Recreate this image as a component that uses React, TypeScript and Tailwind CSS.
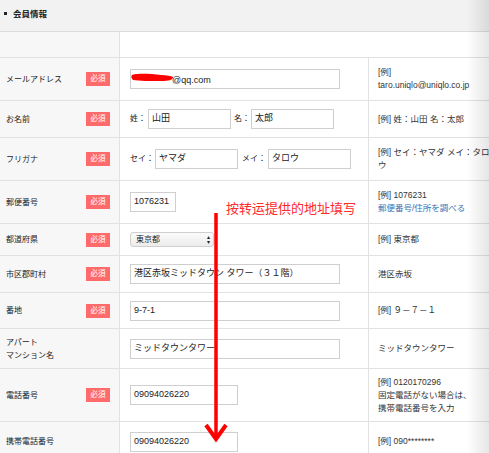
import React from 'react';

const font = { fontFamily: '"Liberation Sans", "Noto Sans CJK JP", sans-serif' };

const Badge = () => (
  <span className="inline-flex items-center justify-center w-[24px] h-[14px] bg-[#ff6b6b] text-white text-[7.5px] leading-none">
    必須
  </span>
);

const Field = ({ value, w }: { value: string; w: string }) => (
  <div className={`h-[20px] ${w} border border-[#cfcfcf] bg-white flex items-center pl-[3px] text-[9px] text-[#222] whitespace-nowrap overflow-hidden`}>
    {value}
  </div>
);

interface RowProps {
  h: string;
  label: React.ReactNode;
  required?: boolean;
  children?: React.ReactNode;
  note?: React.ReactNode;
}

const Row = ({ h, label, required, children, note }: RowProps) => (
  <div className={`flex ${h} border-b border-[#e2e2e2]`}>
    <div className="w-[120px] shrink-0 bg-[#f7f7f7] border-r border-[#e2e2e2] flex items-center justify-between pl-[6px] pr-[9px] text-[8px] text-[#222] leading-[13px]">
      <div>{label}</div>
      {required && <Badge />}
    </div>
    <div className="w-[249px] shrink-0 border-r border-[#e2e2e2] flex items-center pl-[10px]">{children}</div>
    <div className="flex-1 min-w-0 flex items-center pl-[9px] text-[8.5px] text-[#333] leading-[13px]">{note}</div>
  </div>
);

export default function App() {
  return (
    <div className="relative w-[489px] h-[453px] overflow-hidden bg-white" style={font}>
      {/* header */}
      <div className="h-[32px] bg-[#f2f2f2] border-b border-[#dcdcdc] flex items-start pt-[8px] pl-[4px]">
        <span className="w-[3px] h-[3px] bg-[#222] mt-[4px] mr-[6px]" />
        <span className="text-[8.5px] font-bold text-[#222]">会員情報</span>
      </div>

      <div className="flex h-[26px] border-b border-[#e2e2e2]">
        <div className="w-[120px] bg-[#f7f7f7] border-r border-[#e2e2e2]" />
        <div className="flex-1" />
      </div>

      <Row
        h="h-[43px]"
        label="メールアドレス"
        required
        note={
          <div>
            [例]
            <br />
            taro.uniqlo@uniqlo.co.jp
          </div>
        }
      >
        <div className="relative">
          <Field value="" w="w-[210px]" />
          <span className="absolute left-[42px] top-[5px] text-[9px] text-[#222]">@qq.com</span>
          <svg className="absolute left-[1px] top-[2px]" width="44" height="14" viewBox="0 0 44 14">
            <path d="M1 4 C8 2 20 3 30 4 C36 4 40 5 42 6 C42 9 38 10 30 10 C20 10 8 10 2 9 C0 7 0 5 1 4 Z" fill="#ff0000" />
          </svg>
        </div>
      </Row>

      <Row h="h-[37px]" label="お名前" required note="[例] 姓：山田 名：太郎">
        <div className="flex items-center text-[8px] text-[#222]">
          <span className="w-[18px]">姓：</span>
          <Field value="山田" w="w-[83px]" />
          <span className="w-[20px] pl-[3px]">名：</span>
          <Field value="太郎" w="w-[83px]" />
        </div>
      </Row>

      <Row
        h="h-[43px]"
        label="フリガナ"
        required
        note={
          <div>
            <div className="whitespace-nowrap">[例] セイ：ヤマダ メイ：タロ</div>
            <div>ウ</div>
          </div>
        }
      >
        <div className="flex items-center text-[8px] text-[#222]">
          <span className="w-[25px]">セイ：</span>
          <Field value="ヤマダ" w="w-[83px]" />
          <span className="w-[30px] pl-[4px]">メイ：</span>
          <Field value="タロウ" w="w-[83px]" />
        </div>
      </Row>

      <Row
        h="h-[43px]"
        label="郵便番号"
        required
        note={
          <div>
            [例] 1076231
            <br />
            <span className="text-[#3d6fb0]">郵便番号/住所を調べる</span>
          </div>
        }
      >
        <Field value="1076231" w="w-[46px]" />
      </Row>

      <Row h="h-[32px]" label="都道府県" required note="[例] 東京都">
        <div className="h-[15px] w-[84px] rounded-[3px] border border-[#cfcfcf] bg-gradient-to-b from-[#fbfbfb] to-[#ececec] flex items-center justify-between pl-[5px] pr-[3px] text-[8px] text-[#222]">
          <span>東京都</span>
          <span className="text-[6px] leading-[5px] flex flex-col items-center">
            <span>▴</span>
            <span>▾</span>
          </span>
        </div>
      </Row>

      <Row h="h-[37px]" label="市区郡町村" required note="港区赤坂">
        <Field value="港区赤坂ミッドタウン タワー（３１階）" w="w-[210px]" />
      </Row>

      <Row h="h-[36px]" label="番地" required note="[例] ９－７－１">
        <Field value="9-7-1" w="w-[210px]" />
      </Row>

      <Row
        h="h-[40px]"
        label={
          <div>
            アパート
            <br />
            マンション名
          </div>
        }
        note="ミッドタウンタワー"
      >
        <Field value="ミッドタウンタワー" w="w-[210px]" />
      </Row>

      <Row
        h="h-[53px]"
        label="電話番号"
        required
        note={
          <div>
            [例] 0120170296
            <br />
            固定電話がない場合は、
            <br />
            携帯電話番号を入力
          </div>
        }
      >
        <Field value="09094026220" w="w-[108px]" />
      </Row>

      <Row h="h-[40px]" label="携帯電話番号" note="[例] 090********">
        <Field value="09094026220" w="w-[108px]" />
      </Row>

      {/* annotation */}
      <div className="absolute left-[226px] top-[201px] text-[13px] text-[#ff2a2a] leading-none" style={{ fontFamily: '"Noto Sans CJK SC", sans-serif' }}>
        按转运提供的地址填写
      </div>
      <svg className="absolute left-0 top-0 pointer-events-none" width="489" height="453" viewBox="0 0 489 453">
        <line x1="216" y1="213" x2="216" y2="438" stroke="#ff0000" strokeWidth="3.5" />
        <polyline points="206,425 216,439 226,425" fill="none" stroke="#ff0000" strokeWidth="4" strokeLinejoin="miter" />
      </svg>

      {/* right edge shade */}
      <div className="absolute right-0 top-0 h-full w-[22px] bg-gradient-to-r from-transparent to-black/10 pointer-events-none" />
    </div>
  );
}
